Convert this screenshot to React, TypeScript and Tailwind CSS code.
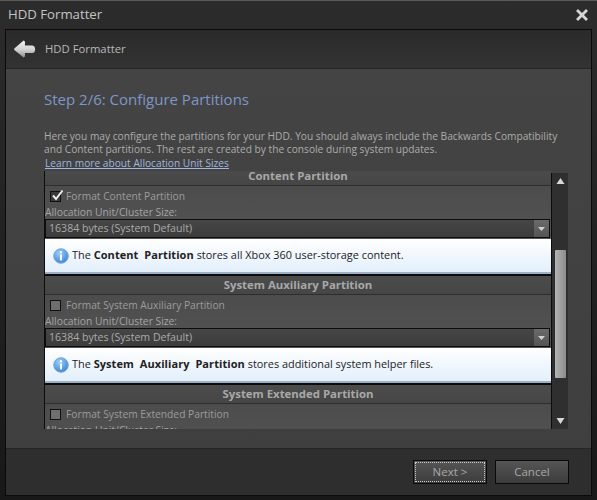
import React from 'react';

const Arrow = ({ up }: { up?: boolean }) => (
  <svg width="9" height="6" viewBox="0 0 9 6" className={up ? '' : 'rotate-180'}>
    <path d="M4.5 0 L8.5 6 L0.5 6 Z" fill="#d8d8d8" />
  </svg>
);

const BackArrow = () => (
  <svg width="23" height="22" viewBox="0 0 26 24">
    <defs>
      <linearGradient id="backGrad" x1="0" y1="0" x2="0" y2="1">
        <stop offset="0" stopColor="#f4f4f4" />
        <stop offset="0.55" stopColor="#d0d0d0" />
        <stop offset="1" stopColor="#8f8f8f" />
      </linearGradient>
    </defs>
    <path d="M12 2.5 L1.5 11.5 Q1 12.2 1.5 13 L12 21.5 L13.5 20.5 L13.5 16.5 L22 16.5 Q25 16 25 12.2 Q25 8.5 22 8 L13.5 8 L13.5 3.5 Z" fill="url(#backGrad)" />
  </svg>
);

const CloseIcon = () => (
  <svg width="14" height="14" viewBox="0 0 14 14">
    <path d="M3 1 L7 5 L11 1 L13 3 L9 7 L13 11 L11 13 L7 9 L3 13 L1 11 L5 7 L1 3 Z" fill="#d6d6d6" stroke="#777" strokeWidth="0.5" />
  </svg>
);

const InfoIcon = () => (
  <svg width="16" height="16" viewBox="0 0 16 16" className="shrink-0">
    <defs>
      <radialGradient id="infoGrad" cx="0.4" cy="0.3" r="0.8">
        <stop offset="0" stopColor="#9fd0f8" />
        <stop offset="1" stopColor="#2a7ed6" />
      </radialGradient>
    </defs>
    <circle cx="8" cy="8" r="7.3" fill="url(#infoGrad)" stroke="#7fa8d0" strokeWidth="1" />
    <rect x="7" y="3.2" width="2" height="2" fill="#fff" />
    <rect x="7" y="6.4" width="2" height="6" fill="#fff" />
  </svg>
);

const Section = ({ title, checkLabel, checked, name, rest }: { title: string; checkLabel: string; checked?: boolean; name: string; rest: string }) => (
  <div>
    <div className="h-[18px] border-b border-[#2e2e2e] bg-gradient-to-b from-[#4c4c4c] to-[#464646] box-content text-center text-[11.4px] leading-[17px] font-bold text-[#a8a8a8]">
      {title}
    </div>
    <div className="h-[53px] bg-gradient-to-b from-[#4c4c4c] to-[#545454]">
      <div className="flex h-[20px] items-center pl-[5px] pt-[1px]">
        <span className={`relative flex h-[11px] w-[11px] items-center justify-center border border-[#111111] ${checked ? 'bg-[#3a3a3a]' : 'bg-[#6e6e6e]'}`}>
          {checked && (
            <svg width="13" height="13" viewBox="0 0 13 13" className="absolute -top-[3px] left-0">
              <path d="M2 6.5 L5 10 L11.5 1.5" fill="none" stroke="#eeeeee" strokeWidth="2" />
            </svg>
          )}
        </span>
        <span className="ml-[5px] text-[10.25px] leading-none text-[#9c9c9c]">{checkLabel}</span>
      </div>
      <div className="h-[12px] text-[10.3px] leading-[12px] text-[#a4a4a4]">Allocation Unit/Cluster Size:</div>
      <div className="mt-[1px] mr-[1px] flex h-[19px] items-center justify-between border border-[#0d0d0d] bg-gradient-to-b from-[#464646] to-[#3c3c3c] pl-[3px]">
        <span className="text-[10.6px] text-[#aaaaaa]">16384 bytes (System Default)</span>
        <span className="flex h-full w-[15px] items-center justify-center bg-gradient-to-b from-[#6a6a6a] to-[#555555]">
          <svg width="7" height="4" viewBox="0 0 7 4"><path d="M0 0 H7 L3.5 4 Z" fill="#cfcfcf" /></svg>
        </span>
      </div>
    </div>
    <div className="flex h-[35px] items-center gap-[2px] border-b-2 border-[#9fb0c4] bg-gradient-to-b from-white to-[#e2effb] pl-[8px] text-[10.9px] text-[#222222]">
      <InfoIcon />
      <span className="ml-[1px] whitespace-pre">The <b className="text-[11px] font-bold tracking-[0.07px]">{name}</b> {rest}</span>
    </div>
    <div className="h-[2px] bg-[#0c0c0c]" />
  </div>
);

export default function App() {
  return (
    <div className="flex h-[500px] w-[597px] flex-col overflow-hidden border-t border-[#5a5a5a] bg-gradient-to-b from-[#2c2c2c] to-[#181818] font-['Open_Sans','Noto_Sans',sans-serif]">
      <div className="flex h-[28px] shrink-0 items-center justify-between px-[8px]">
        <span className="text-[13.2px] text-[#c4c4c4]">HDD Formatter</span>
        <CloseIcon />
      </div>
      <div className="mx-[5px] mb-[4px] flex min-h-0 flex-1 flex-col border border-[#0a0a0a] bg-[#3c3c3c]">
        <div className="flex h-[39px] shrink-0 items-center border-b border-[#252525] bg-gradient-to-b from-[#2a2a2a] to-[#333333] pl-[7px]">
          <BackArrow />
          <span className="ml-[9px] text-[11.3px] text-[#b8b8b8]">HDD Formatter</span>
        </div>
        <div className="flex min-h-0 flex-1 flex-col bg-gradient-to-b from-[#444444] to-[#3f3f3f] pl-[38px] pr-[22px]">
          <div className="mt-[19px] h-[22px] whitespace-nowrap text-[15px] leading-[22px] text-[#7f96c8]">Step 2/6: Configure Partitions</div>
          <div className="mt-[20px] text-[10.2px] leading-[13px] text-[#acacac]">
            <div className="whitespace-nowrap">Here you may configure the partitions for your HDD. You should always include the Backwards Compatibility</div>
            <div className="whitespace-nowrap">and Content partitions. The rest are created by the console during system updates.</div>
          </div>
          <div className="ml-[1px] text-[10.2px] leading-[15px] text-[#9fb6de] underline">Learn more about Allocation Unit Sizes</div>
          <div className="flex h-[258px] shrink-0 overflow-hidden">
            <div className="h-full w-[507px] shrink-0 overflow-hidden border-l border-[#0c0c0c]">
              <div className="-mt-[4px]">
                <Section title="Content Partition" checkLabel="Format Content Partition" checked name="Content  Partition" rest="stores all Xbox 360 user-storage content." />
                <Section title="System Auxiliary Partition" checkLabel="Format System Auxiliary Partition" name="System  Auxiliary  Partition" rest="stores additional system helper files." />
                <Section title="System Extended Partition" checkLabel="Format System Extended Partition" name="System  Extended  Partition" rest="stores system data." />
              </div>
            </div>
            <div className="mt-[2px] flex w-[17px] flex-col items-center border-l border-[#0c0c0c] bg-[#2f2f2f] py-[5px]">
              <Arrow up />
              <div className="mt-[66px] h-[128px] w-[11px] rounded-[1px] bg-gradient-to-r from-[#b4b4b4] to-[#8c8c8c]" />
              <div className="mt-auto"><Arrow /></div>
            </div>
          </div>
        </div>
        <div className="flex h-[47px] shrink-0 items-center justify-end gap-[8px] border-t border-[#252525] bg-[#2e2e2e] pr-[22px]">
          <button className="flex h-[24px] w-[74px] items-center justify-center border border-[#0a0a0a] bg-gradient-to-b from-[#555555] to-[#3c3c3c] text-[11.5px] text-[#a8a8a8] outline-1 -outline-offset-3 outline-dotted outline-[#cccccc]">Next &gt;</button>
          <button className="flex h-[24px] w-[74px] items-center justify-center border border-[#0a0a0a] bg-gradient-to-b from-[#555555] to-[#3c3c3c] text-[11.5px] text-[#a8a8a8]">Cancel</button>
        </div>
      </div>
    </div>
  );
}
